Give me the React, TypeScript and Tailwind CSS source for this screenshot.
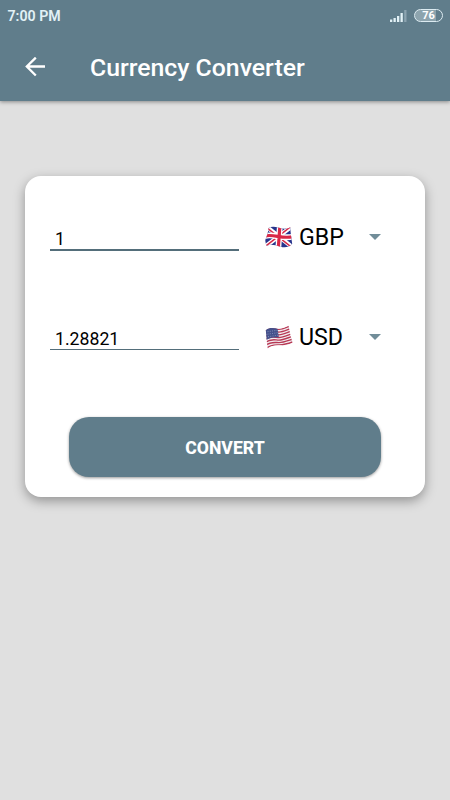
import { useState } from 'react';

function UkFlag() {
  return (
    <svg className="block h-[26px] w-7" viewBox="0 0 28 26">
      <defs>
        <clipPath id="uk">
          <path d="M3.600 4C6.500 2.200 10 2.600 14 3.800C18 5 22 5.200 25.200 3.300C25.600 9 26.400 14 27.200 20C24 23.300 20 24 15.500 22.700C10 21 5 19.800 1.800 22C.8 20 .4 18 .3 16C2 12 3 8.500 3.600 4Z" />
        </clipPath>
      </defs>
      <g clipPath="url(#uk)">
        <path d="M0 0H28V26H0Z" fill="#28348c" />
        <path d="M2 3L27 23M26 3L1 22" stroke="#fff" strokeWidth="4.200" />
        <path d="M2 3.800L27 23.600M26 2.400L1 21.800" stroke="#d62a48" strokeWidth="1.500" />
        <path d="M15 0L13.200 26M0 12C8 9.500 18 15.500 28 12.500" stroke="#fff" strokeWidth="5.800" fill="none" />
        <path d="M15 0L13.200 26M0 12C8 9.500 18 15.500 28 12.500" stroke="#d92746" strokeWidth="3.200" fill="none" />
      </g>
    </svg>
  );
}

function UsFlag() {
  return (
    <svg className="block h-[26px] w-7" viewBox="0 0 28 26">
      <defs>
        <clipPath id="us">
          <path d="M.8 6.300C5 2.800 9 4.500 13 4.700C17 4.900 20.500 3.500 23.500 1.600C24.500 7.500 25.800 13 27.500 18.800C23.500 21.500 19 21.500 15 21.300C10 21 6 21.800 2.800 24.700C1.600 18 1.500 12 .8 6.300Z" />
        </clipPath>
      </defs>
      <g clipPath="url(#us)">
        <path d="M0 0H28V26H0Z" fill="#f3eef2" />
        <g stroke="#b83a55" strokeWidth="1.350" fill="none">
          <path d="M0 6.800C6 2.800 10 5.400 14 5.400S21 3.400 28 1" />
          <path d="M0 9.700C6 5.600 10 8.100 14 8.100S21 6.100 28 3.700" />
          <path d="M0 12.600C6 8.400 10 10.800 14 10.800S21 9 28 6.500" />
          <path d="M0 15.500C6 11.200 10 13.500 14 13.500S21 11.800 28 9.300" />
          <path d="M0 18.500C6 14.200 10 16.100 14 16.100S21 14.500 28 12.100" />
          <path d="M0 21.700C6 17.200 10 18.600 14 18.600S21 17.300 28 15" />
          <path d="M0 25.200C6 20.200 10 20.900 14 20.900S21 20.500 28 17.700" />
        </g>
        <path d="M0 5L7 3L12.500 4.500L13.800 13.300C9 13 6 13.500 1 16Z" fill="#44518c" />
        <path d="M2.500 7.700L12 6.300M2.500 10.200L12.500 8.700M3 12.700L13 11.200" stroke="#929cc3" strokeWidth=".8" strokeDasharray="1 1.300" />
      </g>
    </svg>
  );
}

function StatusBar() {
  return (
    <div className="flex h-8 items-center justify-between pl-[7.500px] pr-[7px]">
      <span className="text-[14.200px] font-semibold leading-8 text-[#e2f1f6]">7:00 PM</span>
      <div className="flex items-center gap-[7px]">
        <svg className="h-3 w-[17px]" viewBox="0 0 17 12">
          <path d="M0 9.500h2.300V12H0zM3.500 8h2.300v4H3.500zM7 6h2.300v6H7zM10.500 3h2.300v9h-2.300z" fill="#e2f1f6" />
          <path d="M14.200 0h2.300v12h-2.300z" fill="#8ba3af" />
        </svg>
        <div className="mb-px flex h-[13px] w-[29px] items-center justify-center rounded-full border border-[#dcebf1] bg-[linear-gradient(90deg,#8da4ae_76%,#607d8b_76%)] text-[11px] font-bold leading-[11px] text-white">
          76
        </div>
      </div>
    </div>
  );
}

function CurrencySelect({ flag, code }: { flag: React.ReactNode; code: string }) {
  return (
    <button className="flex h-8 w-[116px] items-center">
      {flag}
      <span className="ml-1.5 text-[23.200px] leading-8">{code}</span>
      <svg className="ml-auto h-[6px] w-3" viewBox="0 0 12 6">
        <path d="M0 0H12L6 6Z" fill="#718d99" />
      </svg>
    </button>
  );
}

export default function App() {
  const [amount, setAmount] = useState('1');

  return (
    <div className="h-[800px] w-[450px] overflow-hidden bg-[#e0e0e0] font-['Roboto',sans-serif] text-black">
      <header className="h-[101px] bg-[#607d8b] shadow-[0_1px_4px_rgba(0,0,0,0.4)]">
        <StatusBar />
        <div className="flex h-[69px] items-center pl-[25px]">
          <svg className="h-5 w-5" viewBox="0 0 20 20" fill="none" stroke="#fff" strokeWidth="2.300">
            <path d="M20 9.500H2M10.800 .6L1.800 9.500L10.800 18.500" />
          </svg>
          <h1 className="ml-[45px] pt-[3px] text-[24.800px] font-medium leading-8 text-white">Currency Converter</h1>
        </div>
      </header>

      <main className="mx-[25px] mt-[75px] h-[321px] rounded-2xl bg-white pl-[25px] pr-11 pt-[45px] shadow-[0_4px_12px_rgba(0,0,0,0.35)]">
        <div className="flex h-[100px] items-start justify-between">
          <input
            className="h-[30px] w-[189px] border-b-2 border-[#546e7a] pl-[5px] pt-2 text-[17.700px] leading-5 outline-none"
            value={amount}
            onChange={(e) => setAmount(e.target.value)}
          />
          <CurrencySelect flag={<UkFlag />} code="GBP" />
        </div>
        <div className="flex h-[100px] items-start justify-between">
          <div className="h-[29px] w-[189px] border-b border-[#546e7a] pl-[5px] pt-1.5 text-[17.700px] leading-6">1.28821</div>
          <CurrencySelect flag={<UsFlag />} code="USD" />
        </div>
        <button className="ml-[19px] mt-[-4px] block h-[60px] w-[312px] rounded-[20px] bg-[#607d8b] pt-[3px] text-[17.600px] font-extrabold text-white shadow-[0_1px_3px_rgba(0,0,0,0.4)]">
          CONVERT
        </button>
      </main>
    </div>
  );
}
